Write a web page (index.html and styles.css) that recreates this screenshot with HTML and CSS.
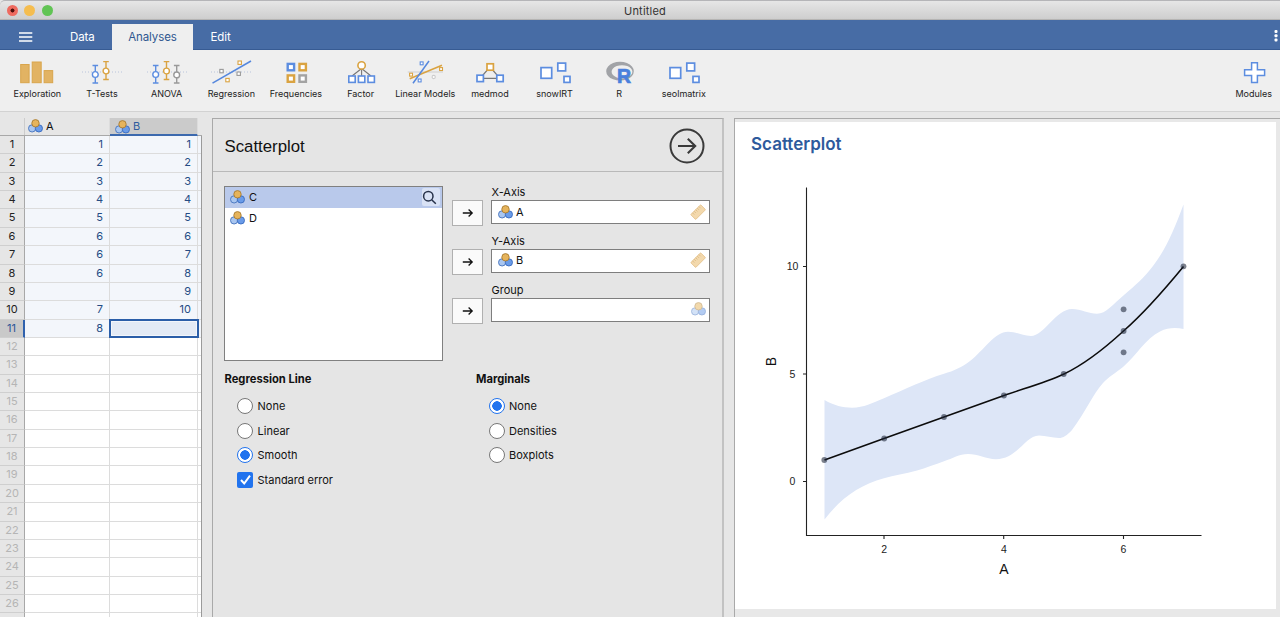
FILE: index.html
```html
<!DOCTYPE html>
<html lang="en">
<head>
<meta charset="utf-8">
<title>Untitled</title>
<link rel="stylesheet" href="styles.css">
</head>
<body>
<svg class="defs" width="0" height="0">
  <symbol id="nominal" viewBox="0 0 15 14">
    <circle cx="4.1" cy="9.4" r="3.6" fill="#a9c6f0" stroke="#4573bd" stroke-width=".9"/>
    <circle cx="10.9" cy="9.4" r="3.6" fill="#6a9be8" stroke="#3a6cc0" stroke-width=".9"/>
    <circle cx="7.5" cy="4.3" r="3.7" fill="#e6b45c" stroke="#a87c33" stroke-width=".9"/>
  </symbol>
  <symbol id="ruler" viewBox="0 0 16 16">
    <g transform="rotate(-45 8 8)"><rect x="1" y="4.7" width="14" height="7" rx=".6" fill="#f3d9ad" stroke="#e4c08a" stroke-width=".8"/>
    <path d="M3.5 4.7v2.5M5.8 4.7v2.5M8 4.7v2.5M10.2 4.7v2.5M12.5 4.7v2.5" stroke="#d9b57c" stroke-width=".7"/></g>
  </symbol>
  <symbol id="arrow" viewBox="0 0 12 12">
    <path d="M.8 6h9.4M6.6 2.5L10.2 6L6.6 9.5" fill="none" stroke="#111" stroke-width="1.3"/>
  </symbol>
  <symbol id="boxes" viewBox="-20 0 40 24">
    <g fill="#fff" stroke="#5c8de0" stroke-width="1.7"><rect x="-14" y="7.6" width="10.7" height="10.7"/><rect x="2.8" y="3.1" width="7.8" height="7.8"/><rect x="9" y="16.4" width="6" height="6"/></g>
  </symbol>
</svg>
<div class="app">
  <header class="titlebar">
    <div class="lights"><i class="light close"></i><i class="light min"></i><i class="light max"></i></div>
    <span class="doc">Untitled</span>
  </header>
  <nav class="tabs">
    <svg class="burger" width="14" height="10" viewBox="0 0 14 10"><path d="M0 1h13.3M0 5h13.3M0 9h13.3" stroke="#fff" stroke-width="1.5"/></svg>
    <span class="tab data">Data</span>
    <span class="tab active">Analyses</span>
    <span class="tab edit">Edit</span>
    <svg class="dots" width="4" height="12" viewBox="0 0 4 12" fill="#fff"><rect x=".5" y="0" width="3" height="3" rx="1"/><rect x=".5" y="4.3" width="3" height="3" rx="1"/><rect x=".5" y="8.6" width="3" height="3" rx="1"/></svg>
  </nav>
  <div class="ribbon">
    <div class="tool"><svg viewBox="-20 0 40 24"><g fill="#e2b363" stroke="#d9a54c"><rect x="-16.3" y="4.5" width="8.4" height="18.2"/><rect x="-4.8" y="2" width="9" height="20.7"/><rect x="7.1" y="10.6" width="8.6" height="12.1"/></g></svg><span>Exploration</span></div>
    <div class="tool"><svg viewBox="-20 0 40 24"><path d="M-20 12H20" stroke="#b9c4dc" stroke-dasharray="1 2"/><g fill="#fff" stroke-width="1.4"><g stroke="#5c8de0"><path d="M-9.5 5.5h5.6M-9.5 23h5.6M-6.7 5.5V23"/><circle cx="-6.7" cy="14.5" r="2.9"/></g><g stroke="#daa341"><path d="M1.2 1.6h5.6M1.2 19.5h5.6M4 1.6v18"/><circle cx="4" cy="11" r="2.9"/></g></g></svg><span>T-Tests</span></div>
    <div class="tool"><svg viewBox="-20 0 40 24"><path d="M-20 12H20" stroke="#b9c4dc" stroke-dasharray="1 2"/><g fill="#fff" stroke-width="1.4"><g stroke="#5c8de0"><path d="M-14.1 5.5h5.6M-14.1 23h5.6M-11.3 5.5V23"/><circle cx="-11.3" cy="14.5" r="2.9"/></g><g stroke="#daa341"><path d="M-3.3 1.6h5.6M-3.3 19.5h5.6M-.5 1.6v18"/><circle cx="-.5" cy="11" r="2.9"/></g><g stroke="#999"><path d="M6.9 5.5h5.6M6.9 23h5.6M9.7 5.5V23"/><circle cx="9.7" cy="14.9" r="2.9"/></g></g></svg><span>ANOVA</span></div>
    <div class="tool"><svg viewBox="-20 0 40 24"><path d="M-20 12H20" stroke="#b9c4dc" stroke-dasharray="1 2"/><path d="M-18.5 23.2L20 1" stroke="#5587dd" stroke-width="1.5"/><g fill="#fff" stroke-width="1.1"><g stroke="#daa341"><rect x="7" y="1" width="3.4" height="3.4"/><rect x="-5.2" y="18.4" width="3.4" height="3.4"/></g><g stroke="#999"><rect x="-11.2" y="9.4" width="3.4" height="3.4"/><rect x="6" y="12" width="3.4" height="3.4"/></g></g></svg><span>Regression</span></div>
    <div class="tool"><svg viewBox="-20 0 40 24"><g fill="#fff" stroke-width="2.4"><rect x="-8.3" y="3.9" width="6.4" height="6.4" stroke="#5c8de0"/><rect x="3.5" y="3.9" width="6.4" height="6.4" stroke="#daa341"/><rect x="-8.3" y="15.4" width="6.4" height="6.4" stroke="#daa341"/><rect x="3.5" y="15.4" width="6.4" height="6.4" stroke="#a3a3a3"/></g></svg><span>Frequencies</span></div>
    <div class="tool"><svg viewBox="-20 0 40 24"><path d="M.6 8.5L-9 16M.6 8.5V16M.6 8.5L10 16" stroke="#777" stroke-width="1.1"/><g fill="#fff" stroke-width="1.6"><circle cx=".6" cy="5.4" r="3.7" stroke="#daa341"/><g stroke="#5c8de0"><rect x="-12.2" y="16" width="6.4" height="6.4"/><rect x="-2.6" y="16" width="6.4" height="6.4"/><rect x="7" y="16" width="6.4" height="6.4"/></g></g></svg><span>Factor</span></div>
    <div class="tool"><svg viewBox="-20 0 40 24"><path d="M-17.3 12H18" stroke="#dadada" stroke-width="1.3"/><path d="M-15.3 18.7L17 5.3" stroke="#daa341" stroke-width="1.5"/><path d="M-12 23.3L4 1" stroke="#5587dd" stroke-width="1.5"/><g fill="#fff" stroke-width="1.1"><rect x="-4.8" y="1.9" width="2.9" height="2.9" stroke="#5c8de0"/><rect x="-6.8" y="19" width="2.9" height="2.9" stroke="#5c8de0"/><rect x="14.6" y="7.6" width="2.9" height="2.9" stroke="#daa341"/><rect x="-15.4" y="13.2" width="2.9" height="2.9" stroke="#daa341"/><circle cx="8.7" cy="17" r="1.6" stroke="#ccc"/></g></svg><span>Linear Models</span></div>
    <div class="tool"><svg viewBox="-20 0 40 24"><path d="M0 7L-10 18.3H10Z" stroke="#777" stroke-width="1.2" fill="none"/><g fill="#fff" stroke-width="1.7"><rect x="-3" y="3.8" width="6.4" height="6.4" stroke="#daa341"/><rect x="-13" y="15.2" width="6.4" height="6.4" stroke="#5c8de0"/><rect x="6.8" y="15.2" width="6.4" height="6.4" stroke="#5c8de0"/></g></svg><span>medmod</span></div>
    <div class="tool"><svg><use href="#boxes"/></svg><span>snowIRT</span></div>
    <div class="tool"><svg viewBox="-20 0 40 24"><path fill="#a1a3a7" fill-rule="evenodd" d="M1 1.8a13.8 9.4 0 1 0 .01 0ZM3 5.2a10.4 6.6 0 1 1 -.01 0Z"/><text class="rmark" x="-2" y="23.2">R</text></svg><span>R</span></div>
    <div class="tool"><svg><use href="#boxes"/></svg><span>seolmatrix</span></div>
    <div class="tool modules"><svg viewBox="-20 0 40 24"><path d="M-2.4 2.7H3.4V9.7H10.6V15.5H3.4V22.6H-2.4V15.5H-9.4V9.7H-2.4Z" fill="#fff" stroke="#5c8de0" stroke-width="1.5"/></svg><span>Modules</span></div>
  </div>
  <main class="main">
    <section class="sheet">
      <div class="row head"><span class="n"></span><span class="c"><svg class="nom"><use href="#nominal"/></svg>A</span><span class="c sel"><svg class="nom"><use href="#nominal"/></svg>B</span><span class="x"></span></div>
      <div class="row on"><b class="n">1</b><span class="c">1</span><span class="c">1</span><span class="x"></span></div>
      <div class="row on"><b class="n">2</b><span class="c">2</span><span class="c">2</span><span class="x"></span></div>
      <div class="row on"><b class="n">3</b><span class="c">3</span><span class="c">3</span><span class="x"></span></div>
      <div class="row on"><b class="n">4</b><span class="c">4</span><span class="c">4</span><span class="x"></span></div>
      <div class="row on"><b class="n">5</b><span class="c">5</span><span class="c">5</span><span class="x"></span></div>
      <div class="row on"><b class="n">6</b><span class="c">6</span><span class="c">6</span><span class="x"></span></div>
      <div class="row on"><b class="n">7</b><span class="c">6</span><span class="c">7</span><span class="x"></span></div>
      <div class="row on"><b class="n">8</b><span class="c">6</span><span class="c">8</span><span class="x"></span></div>
      <div class="row on"><b class="n">9</b><span class="c"></span><span class="c">9</span><span class="x"></span></div>
      <div class="row on"><b class="n">10</b><span class="c">7</span><span class="c">10</span><span class="x"></span></div>
      <div class="row on"><b class="n cur">11</b><span class="c">8</span><span class="c cursor"></span><span class="x"></span></div>
      <div class="row"><b class="n">12</b><span class="c"></span><span class="c"></span><span class="x"></span></div>
      <div class="row"><b class="n">13</b><span class="c"></span><span class="c"></span><span class="x"></span></div>
      <div class="row"><b class="n">14</b><span class="c"></span><span class="c"></span><span class="x"></span></div>
      <div class="row"><b class="n">15</b><span class="c"></span><span class="c"></span><span class="x"></span></div>
      <div class="row"><b class="n">16</b><span class="c"></span><span class="c"></span><span class="x"></span></div>
      <div class="row"><b class="n">17</b><span class="c"></span><span class="c"></span><span class="x"></span></div>
      <div class="row"><b class="n">18</b><span class="c"></span><span class="c"></span><span class="x"></span></div>
      <div class="row"><b class="n">19</b><span class="c"></span><span class="c"></span><span class="x"></span></div>
      <div class="row"><b class="n">20</b><span class="c"></span><span class="c"></span><span class="x"></span></div>
      <div class="row"><b class="n">21</b><span class="c"></span><span class="c"></span><span class="x"></span></div>
      <div class="row"><b class="n">22</b><span class="c"></span><span class="c"></span><span class="x"></span></div>
      <div class="row"><b class="n">23</b><span class="c"></span><span class="c"></span><span class="x"></span></div>
      <div class="row"><b class="n">24</b><span class="c"></span><span class="c"></span><span class="x"></span></div>
      <div class="row"><b class="n">25</b><span class="c"></span><span class="c"></span><span class="x"></span></div>
      <div class="row"><b class="n">26</b><span class="c"></span><span class="c"></span><span class="x"></span></div>
      <div class="row"><b class="n"></b><span class="c"></span><span class="c"></span><span class="x"></span></div>
    </section>
    <section class="panel">
      <div class="panel-head">
        <h1>Scatterplot</h1>
        <svg width="36" height="36" viewBox="0 0 36 36" fill="none" stroke="#3a3a3a"><circle cx="18" cy="18" r="16.5" stroke-width="2"/><path d="M9 18h17.2M18.8 10.8L26.2 18L18.8 25.2" stroke-width="2.1"/></svg>
      </div>
      <div class="vars">
        <div class="list">
          <div class="item picked"><svg class="nom"><use href="#nominal"/></svg><span>C</span><i class="search"><svg width="15" height="15" viewBox="0 0 15 15" fill="none" stroke="#27324a" stroke-width="1.5"><circle cx="6.3" cy="6.2" r="4.7"/><path d="M9.7 9.7L13.8 13.8"/></svg></i></div>
          <div class="item"><svg class="nom"><use href="#nominal"/></svg><span>D</span></div>
        </div>
        <div class="targets">
          <div class="target"><div class="move"><svg><use href="#arrow"/></svg></div><div class="slot"><label>X-Axis</label><div class="field"><svg class="nom"><use href="#nominal"/></svg><span>A</span><svg class="hint"><use href="#ruler"/></svg></div></div></div>
          <div class="target"><div class="move"><svg><use href="#arrow"/></svg></div><div class="slot"><label>Y-Axis</label><div class="field"><svg class="nom"><use href="#nominal"/></svg><span>B</span><svg class="hint"><use href="#ruler"/></svg></div></div></div>
          <div class="target"><div class="move"><svg><use href="#arrow"/></svg></div><div class="slot"><label>Group</label><div class="field"><svg class="nom faded"><use href="#nominal"/></svg></div></div></div>
        </div>
      </div>
      <div class="options">
        <div class="group"><h2>Regression Line</h2>
          <div class="opt"><i class="radio"></i>None</div>
          <div class="opt"><i class="radio"></i>Linear</div>
          <div class="opt"><i class="radio checked"></i>Smooth</div>
          <div class="opt"><i class="check"><svg width="15" height="15" viewBox="0 0 15 15"><path d="M3 8L6.2 11.5L12 3.6" fill="none" stroke="#fff" stroke-width="2"/></svg></i>Standard error</div>
        </div>
        <div class="group"><h2>Marginals</h2>
          <div class="opt"><i class="radio checked"></i>None</div>
          <div class="opt"><i class="radio"></i>Densities</div>
          <div class="opt"><i class="radio"></i>Boxplots</div>
        </div>
      </div>
    </section>
    <section class="results">
      <div class="page">
        <h1>Scatterplot</h1>
        <svg class="plot" width="541" height="449" viewBox="735 160 541 449">
          <path fill="#dde6f7" d="M824.5 400C834 405.500 843 407.700 852 407.700C864 407.500 872 403.300 884 398.300C905 389 925 379.500 944 373.700C954 371 962 367 970 361C984 350 995 331.700 1008 331.700C1017 331.700 1022 336 1031 336C1044 336 1056 309 1072 309C1081 309 1089 313.800 1097 313.800C1106 313.800 1113 304 1124 295C1135 285.500 1144 278 1153 266C1166 249 1174 230 1183.500 204.500V329C1176 327.500 1168 327.500 1160 331.500C1146 338 1136 356 1123 367C1115 373.500 1109 376.500 1103 383C1093 394 1085 413 1072 430C1067 435.500 1063 438 1059 438C1052 438 1046 435.500 1039 435.500C1025 435.500 1018 459 996 459.200C986 459 978 454 968 454C959 454 953 458.300 944 461.300C935 464.500 926 468 917 470.500C905 474 894 475.300 884 478.300C860 485 842 497 824.500 519.500Z"/>
          <g stroke="#222" stroke-width="1.1" fill="none"><path d="M806.500 187.500V535.500H1201.500"/><path d="M803 266.500h3.500M803 374h3.500M803 481.500h3.500M884 535.500v3.500M1003.700 535.500v3.500M1123.500 535.500v3.500"/></g>
          <path d="M824.500 460L884 438.500L944 417L1004 395.500C1022 389 1045 383 1064 374C1085 364 1105 348 1123.500 331C1143 314 1165 289 1183.500 266.500" fill="none" stroke="#0c0c0c" stroke-width="1.6"/>
          <g fill="#1d2639" fill-opacity=".58"><circle cx="824.3" cy="460" r="2.9"/><circle cx="884.2" cy="438.500" r="2.9"/><circle cx="944" cy="417" r="2.9"/><circle cx="1003.900" cy="395.500" r="2.9"/><circle cx="1063.700" cy="374" r="2.9"/><circle cx="1123.600" cy="352.300" r="2.9"/><circle cx="1123.600" cy="331" r="2.9"/><circle cx="1123.600" cy="309.300" r="2.9"/><circle cx="1183.500" cy="266.300" r="2.9"/></g>
          <g class="ticks"><text x="792.5" y="270.300">10</text><text x="792.5" y="377.800">5</text><text x="792.5" y="485.300">0</text><text x="884.2" y="552.500">2</text><text x="1003.900" y="552.500">4</text><text x="1123.500" y="552.500">6</text></g>
          <g class="axis"><text x="1003.900" y="574.200">A</text><text transform="translate(776 361.500) rotate(-90)">B</text></g>
        </svg>
      </div>
    </section>
  </main>
</div>
</body>
</html>
```
FILE: styles.css
```css
* { box-sizing: border-box; }
body { margin: 0; font-family: Inter, "Liberation Sans", sans-serif; color: #111; background: #e6e6e6; }
h1, h2 { margin: 0; }
i { font-style: normal; }
svg { display: block; flex: none; }
.defs { display: none; }
.app { width: 1280px; height: 617px; overflow: hidden; display: flex; flex-direction: column; }

.titlebar { flex: none; height: 20px; display: grid; grid-template-columns: 56px 1fr 46px; align-items: center; border-top: 1px solid #b5b5b8; border-top-left-radius: 5px; background: linear-gradient(#e6e6e6, #cecece); border-bottom: 1px solid #b5b4b3; }
.lights { display: flex; gap: 6.5px; padding-left: 6.500px; }
.light { width: 11px; height: 11px; border-radius: 50%; }
.close { background: radial-gradient(circle, #4c0f0b 1.7px, #ee6a5f 2.3px); }
.min { background: #f5bd4f; }
.max { background: #61c454; }
.doc { text-align: center; font-size: 11px; line-height: 14px; color: #333; letter-spacing: .2px; padding-top: 1px; }

.tabs { flex: none; height: 30px; display: flex; align-items: flex-end; background: #476ca5; border-bottom: 1px solid #375b93; color: #fff; }
.burger { margin: 0 37px 7px 19px; }
.tab { height: 25px; line-height: 27px; font-size: 11.5px; font-weight: 400; letter-spacing: -.1px; }
.data { width: 42px; }
.active { width: 81px; text-align: center; background: #efefef; color: #2f5790; margin-bottom: -1px; height: 26px; }
.edit { margin-left: 17.500px; flex: 1; }
.dots { margin-right: 2.500px; margin-bottom: 7px; }

.ribbon { flex: none; height: 62px; padding: 10px 0 0 5px; background: #efefef; border-bottom: 1px solid #d2d2d2; display: flex; }
.tool { width: 64.66px; display: flex; flex-direction: column; align-items: center; gap: 3px; font-size: 9px; line-height: 13px; letter-spacing: 0; color: #222; white-space: nowrap; }
.tool svg { width: 40px; height: 24px; overflow: visible; }
.modules { margin-left: auto; margin-right: -6px; }
.rmark { font: bold 19.500px/1 "Liberation Sans", sans-serif; fill: #4a80dc; stroke: #4a80dc; stroke-width: .7; }

.main { flex: 1; min-height: 0; display: flex; padding-top: 6px; background: #e6e6e6; }
.nom { width: 15px; height: 14px; }

.sheet { width: 202px; border-right: 1px solid #9a9a9a; margin-right: 10px; background: #fff; }
.row { display: grid; grid-template: 100% / 25px 85px 88px 1fr; height: 18.36px; font-size: 11px; }
.row > * { border-right: 1px solid #dcdcdc; border-bottom: 1px solid #dcdcdc; text-align: right; line-height: 17px; }
.row .c { padding-right: 6px; color: #254b84; }
.row .x { border-right: 0; }
.row .n { background: #e6e6e6; border-right: 1px solid #a8a8a8; border-bottom-color: #cfcfcf; font-weight: 400; text-align: center; color: #b5b5b5; }
.on .n { color: #222; }
.on > .c, .on > .x { background: #f3f6fb; }
.on .n.cur { background: #c9c9c9; color: #2b5798; border-right: 2px solid #2f61ad; }
.row .cursor { margin: -1px -1px 0 -1px; background: #e3eaf5; border: 2px solid #2b5ea8; box-shadow: inset 0 0 0 1px #f3f6fb; position: relative; }
.head { height: 18px; margin-right: -1px; background: #e6e6e6; border-bottom: 1px solid #a8a8a8; }
.head > .n { border-right-color: #ccc; border-bottom: 0; }
.head > .c { display: flex; align-items: center; gap: 3px; padding-left: 3px; color: #111; border-bottom: 0; height: 16px; }
.head > .sel { background: #cbcbcb; color: #2f5c9e; padding-left: 5px; padding-top: 1px; height: 18px; border-bottom: 2px solid #3c69ae; }
.head > .x { border: 0; }

.panel { width: 512px; border: 1px solid #a9a9a9; border-right: 2px solid #c2c2c2; border-bottom: 0; background: #e5e5e5; margin-right: 10px; }
.panel-head { height: 53px; display: flex; justify-content: space-between; align-items: center; padding: 1px 17px 0 11.500px; border-bottom: 1px solid #b9b9b9; }
.panel-head h1 { font: 400 16.800px "Liberation Sans", sans-serif; padding-top: 2px; }
.vars { display: flex; gap: 9px; padding: 14px 0 0 11px; font-size: 11px; }
.list { width: 219px; height: 175px; background: #fff; border: 1px solid #808080; }
.item { height: 21px; display: flex; align-items: center; gap: 4px; padding-left: 5px; padding-bottom: 1px; }
.picked { background: #b9c9eb; }
.search { margin-left: auto; margin-right: 2px; width: 18px; height: 18px; border-radius: 2px; background: #d9e2f5; display: grid; place-items: center start; }
.targets { display: flex; flex-direction: column; }
.target { height: 48.900px; display: flex; gap: 8px; }
.move { width: 31px; height: 26px; margin-top: 14px; background: #fafafa; border: 1px solid #b0b0b0; display: grid; place-items: center; }
.move svg { width: 12px; height: 12px; }
.slot label { display: block; height: 14px; line-height: 12px; padding-left: .5px; }
.field { width: 219px; height: 24px; background: #fff; border: 1px solid #7e7e7e; display: flex; align-items: center; gap: 3.500px; padding: 0 3px 1px 5.500px; }
.hint { width: 16px; height: 16px; margin-left: auto; }
.faded { margin-left: auto; opacity: .5; }
.options { display: flex; padding: 11px 0 0 11.500px; font-size: 11px; }
.group { flex: none; width: 251.500px; }
.group + .group { width: 200px; }
.group h2 { font-size: 11.200px; font-weight: 700; line-height: 14px; margin-bottom: 8px; }
.opt { height: 24.500px; display: flex; align-items: center; gap: 4.500px; padding-left: 12.500px; line-height: 24px; }
.radio { width: 16px; height: 16px; border-radius: 50%; border: 1px solid #777; background: #fff; }
.checked { border: 1.5px solid #2173ee; background: radial-gradient(circle, #2173ee 4.500px, #fff 5px); }
.check { width: 16px; height: 16px; border-radius: 2px; background: #2173ee; display: grid; place-items: center; }

.results { flex: 1; border: 1px solid #a9a9a9; border-right: 0; border-bottom: 0; padding: 3px 4px 8px 0; background: #e8e8e8; }
.page { height: 487px; background: #fff; }
.page h1 { height: 38px; line-height: 44px; padding-left: 16px; font-size: 17px; font-weight: 600; color: #2d5a9c; }
.ticks { font: 10.500px "Liberation Sans", sans-serif; fill: #222; text-anchor: middle; }
.axis { font: 14px "Liberation Sans", sans-serif; fill: #111; text-anchor: middle; }
```
